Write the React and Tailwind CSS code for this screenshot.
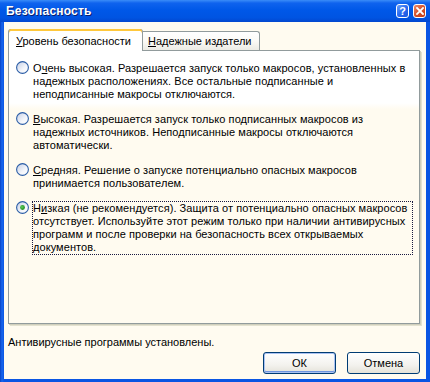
import React from 'react';

const font = { fontFamily: '"Liberation Sans", Arial, sans-serif' };

const options = [
  {
    lines: [
      [<>О<u>ч</u>ень высокая. Разрешается запуск только макросов, установленных в</>],
      ['надежных расположениях. Все остальные подписанные и'],
      ['неподписанные макросы отключаются.'],
    ],
  },
  {
    lines: [
      [<><u>В</u>ысокая. Разрешается запуск только подписанных макросов из</>],
      ['надежных источников. Неподписанные макросы отключаются'],
      ['автоматически.'],
    ],
  },
  {
    lines: [
      [<><u>С</u>редняя. Решение о запуске потенциально опасных макросов</>],
      ['принимается пользователем.'],
    ],
  },
  {
    checked: true,
    lines: [
      [<>Н<u>и</u>зкая (не рекомендуется). Защита от потенциально опасных макросов</>],
      ['отсутствует. Используйте этот режим только при наличии антивирусных'],
      ['программ и после проверки на безопасность всех открываемых'],
      ['документов.'],
    ],
  },
];

function Radio({ checked }) {
  return (
    <svg width="13" height="13" viewBox="0 0 13 13" className="shrink-0">
      <defs>
        <linearGradient id="rfill" x1="0" y1="0" x2="1" y2="1">
          <stop offset="0" stopColor="#c3cde4" />
          <stop offset="0.6" stopColor="#f4f6fb" />
          <stop offset="1" stopColor="#ffffff" />
        </linearGradient>
        <radialGradient id="rdot" cx="0.4" cy="0.4" r="0.6">
          <stop offset="0" stopColor="#5fd05f" />
          <stop offset="1" stopColor="#1c8a1c" />
        </radialGradient>
      </defs>
      <circle cx="6.5" cy="6.5" r="5.9" fill="url(#rfill)" stroke="#2b5da6" strokeWidth="1.1" />
      {checked && <circle cx="6.5" cy="6.5" r="2.4" fill="url(#rdot)" />}
    </svg>
  );
}

function XpButton({ children, primary }) {
  return (
    <button
      className={
        primary
          ? 'w-[73px] h-[22px] rounded-[3px] border border-[#003c74] bg-[linear-gradient(to_bottom,#ffffff,#f3f2ee_60%,#e4e2d9)] shadow-[inset_0_0_0_1px_#aac2f2,inset_0_-1px_0_1px_#6f95e0] text-[11px] text-black leading-none'
          : 'w-[73px] h-[22px] rounded-[3px] border border-[#003c74] bg-[linear-gradient(to_bottom,#ffffff,#f3f2ee_60%,#e4e2d9)] text-[11px] text-black leading-none'
      }
      style={font}
    >
      {children}
    </button>
  );
}

export default function App() {
  return (
    <div
      className="w-[430px] h-[382px] flex flex-col bg-[linear-gradient(to_right,#0841c4,#1866ee_2px,#0a55e3_4px)] overflow-hidden"
      style={font}
    >
      {/* title bar */}
      <div className="h-[22px] shrink-0 flex items-center pl-[6px] pr-[4px] bg-[linear-gradient(to_bottom,#3a8cf8_0%,#0f63ee_14%,#0058e8_45%,#0054e2_80%,#0347cf_100%)]">
        <span className="text-white font-bold text-[12px] [text-shadow:1px_1px_0_#0a1f6e] tracking-[0.2px]">
          Безопасность
        </span>
        <div className="ml-auto flex gap-[4px]">
          <div className="w-[13px] h-[14px] rounded-[3px] border border-white bg-[linear-gradient(135deg,#6ba1fb,#2a6af0_50%,#1d58de)] flex items-center justify-center text-white font-bold text-[11px] leading-none">
            ?
          </div>
          <div className="w-[13px] h-[14px] rounded-[3px] border border-white bg-[linear-gradient(135deg,#ec8c70,#d6522b_50%,#c13d16)] flex items-center justify-center">
            <svg width="8" height="8" viewBox="0 0 8 8">
              <path d="M1 1 L7 7 M7 1 L1 7" stroke="#fff" strokeWidth="1.8" strokeLinecap="square" />
            </svg>
          </div>
        </div>
      </div>

      {/* body */}
      <div className="flex-1 mx-[4px] mb-[3px] bg-[#fffbf0] flex flex-col pl-[4px] pr-[6px] pt-[7px]">
        {/* tabs */}
        <div className="flex items-end h-[21px] text-[11px] text-black">
          <div className="relative z-10 -mb-px w-[135px] h-[22px] bg-white border-x border-[#919b9c] rounded-t-[3px] pl-[7px] flex items-center shadow-[inset_0_2px_0_#ffc83c,inset_0_1px_0_#e68b2c]">
            <span className="pt-[2px]">
              <u>У</u>ровень безопасности
            </span>
          </div>
          <div className="w-[117px] h-[19px] bg-[linear-gradient(to_bottom,#ffffff,#fbfaf6_50%,#ecebe4)] border-t border-r border-[#919b9c] rounded-tr-[3px] pl-[5px] flex items-center">
            <span className="pt-[1px]">
              <u>Н</u>адежные издатели
            </span>
          </div>
        </div>

        {/* panel */}
        <div className="h-[274px] border border-[#919b9c] shadow-[1px_1px_0_#d0cfbd,2px_2px_0_#e4e2cf] bg-[linear-gradient(to_bottom,#ffffff_0px,#ffffff_52px,#fffbf0_58px)] pl-[7px] pt-[10px] flex flex-col gap-[10px]">
          {options.map((o, i) => (
            <div key={i} className="flex items-start gap-[3px]">
              <Radio checked={o.checked} />
              <div
                className={
                  o.checked
                    ? 'w-[381px] border border-dotted border-[#1a1a40] text-[11px] leading-[13px] tracking-[0.06px] text-black'
                    : 'w-[381px] border border-transparent text-[11px] leading-[13px] tracking-[0.06px] text-black'
                }
              >
                {o.lines.map((l, j) => (
                  <div key={j} className="whitespace-nowrap">
                    {l}
                  </div>
                ))}
              </div>
            </div>
          ))}
        </div>

        <div className="mt-[12px] text-[11px] leading-[13px] text-black">
          Антивирусные программы установлены.
        </div>

        <div className="mt-[3px] flex justify-end gap-[11px]">
          <XpButton primary>ОК</XpButton>
          <XpButton>Отмена</XpButton>
        </div>
      </div>
    </div>
  );
}
